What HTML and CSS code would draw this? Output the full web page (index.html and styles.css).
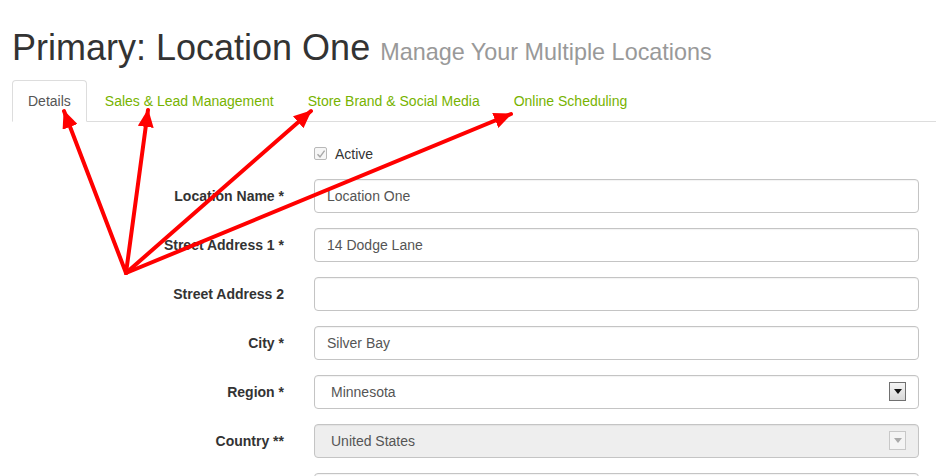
FILE: index.html
```html
<!DOCTYPE html>
<html lang="en">
<head>
    <meta charset="UTF-8">
    <title>Primary: Location One</title>
    <link rel="stylesheet" href="styles.css">
</head>
<body>
    <div class="page">
        <h1>Primary: Location One <small>Manage Your Multiple Locations</small></h1>

        <ul class="tabs">
            <li class="active"><a href="#">Details</a></li>
            <li><a href="#">Sales &amp; Lead Management</a></li>
            <li><a href="#">Store Brand &amp; Social Media</a></li>
            <li><a href="#">Online Scheduling</a></li>
        </ul>

        <form class="location-form">
            <div class="form-row check-row">
                <div class="label-col"></div>
                <label class="check">
                    <span class="box">
                        <svg width="10" height="10" viewBox="0 0 10 10"><path d="M1.5 5.2 L4 7.8 L8.6 1.6" fill="none" stroke="#a8a8a8" stroke-width="1.4"/></svg>
                    </span>
                    Active
                </label>
            </div>
            <div class="form-row">
                <label class="label-col">Location Name *</label>
                <input type="text" value="Location One">
            </div>
            <div class="form-row">
                <label class="label-col">Street Address 1 *</label>
                <input type="text" value="14 Dodge Lane">
            </div>
            <div class="form-row">
                <label class="label-col">Street Address 2</label>
                <input type="text" value="">
            </div>
            <div class="form-row">
                <label class="label-col">City *</label>
                <input type="text" value="Silver Bay">
            </div>
            <div class="form-row">
                <label class="label-col">Region *</label>
                <div class="select">
                    <span>Minnesota</span>
                    <span class="arrow-btn"><svg width="8" height="5" viewBox="0 0 8 5"><path d="M0 0 H8 L4 5 Z" fill="#111"/></svg></span>
                </div>
            </div>
            <div class="form-row">
                <label class="label-col">Country **</label>
                <div class="select disabled">
                    <span>United States</span>
                    <span class="arrow-btn"><svg width="8" height="5" viewBox="0 0 8 5"><path d="M0 0 H8 L4 5 Z" fill="#aaa"/></svg></span>
                </div>
            </div>
            <div class="form-row">
                <div class="label-col"></div>
                <input type="text" value="">
            </div>
        </form>
    </div>

    <svg class="arrows" width="936" height="476">
        <defs>
            <marker id="head" markerUnits="userSpaceOnUse" markerWidth="18" markerHeight="16" refX="17" refY="8" orient="auto">
                <path d="M0 0 L18 8 L0 16 Z" fill="#ff0000"/>
            </marker>
        </defs>
        <g stroke="#ff0000" stroke-width="4" stroke-linecap="round" fill="none">
            <line x1="126" y1="273" x2="64" y2="111" marker-end="url(#head)"/>
            <line x1="126" y1="273" x2="148" y2="110" marker-end="url(#head)"/>
            <line x1="126" y1="273" x2="311" y2="111" marker-end="url(#head)"/>
            <line x1="126" y1="273" x2="511" y2="114" marker-end="url(#head)"/>
        </g>
    </svg>
</body>
</html>
```

FILE: styles.css
```css
body {
    margin: 0;
    font-family: 'Liberation Sans', Arial, sans-serif;
    font-size: 14px;
    color: #333;
    background: #fff;
    overflow: hidden;
}

.page {
    padding-left: 12px;
}

h1 {
    margin: 28px 0 12px;
    font-size: 36px;
    font-weight: normal;
    line-height: 1.1;
    color: #333;
}

h1 small {
    font-size: 65%;
    color: #999;
}

.tabs {
    display: flex;
    list-style: none;
    margin: 0;
    padding: 0;
    border-bottom: 1px solid #ddd;
}

.tabs li {
    margin-right: 2px;
    margin-bottom: -1px;
}

.tabs a {
    display: block;
    padding: 10px 15px;
    line-height: 20px;
    color: #77b300;
    text-decoration: none;
    border: 1px solid transparent;
    border-radius: 4px 4px 0 0;
}

.tabs li.active a {
    color: #555;
    background: #fff;
    border-color: #ddd #ddd transparent;
}

.location-form {
    margin: 15px 17px 0 0;
}

.form-row {
    display: flex;
    align-items: flex-start;
    gap: 30px;
    margin-bottom: 15px;
}

.label-col {
    width: 272px;
    flex: none;
    padding-top: 7px;
    line-height: 20px;
    text-align: right;
    font-weight: bold;
}

.check-row .label-col {
    padding-top: 0;
}

.check {
    display: flex;
    align-items: center;
    gap: 8px;
    padding-top: 7px;
    line-height: 20px;
}

.box {
    display: inline-flex;
    align-items: center;
    justify-content: center;
    width: 11px;
    height: 11px;
    border: 1px solid #b8b8b8;
    background: #f6f6f6;
    border-radius: 2px;
}

input,
.select {
    flex: 1;
    box-sizing: border-box;
    height: 34px;
    padding: 6px 12px;
    font-family: inherit;
    font-size: 14px;
    color: #555;
    background: #fff;
    border: 1px solid #c4c4c4;
    border-radius: 4px;
    box-shadow: inset 0 1px 1px rgba(0, 0, 0, 0.05);
}

.select {
    display: flex;
    align-items: center;
    justify-content: space-between;
    padding: 0 12px 0 16px;
}

.select.disabled {
    background: #eee;
}

.arrow-btn {
    display: flex;
    align-items: center;
    justify-content: center;
    box-sizing: border-box;
    width: 17px;
    height: 19px;
    border: 1px solid #707070;
    background: linear-gradient(#f4f4f4, #d8d8d8);
}

.select.disabled .arrow-btn {
    border-color: #c8c8c8;
    background: #f4f4f4;
}

.arrows {
    position: absolute;
    left: 0;
    top: 0;
    pointer-events: none;
}
```
